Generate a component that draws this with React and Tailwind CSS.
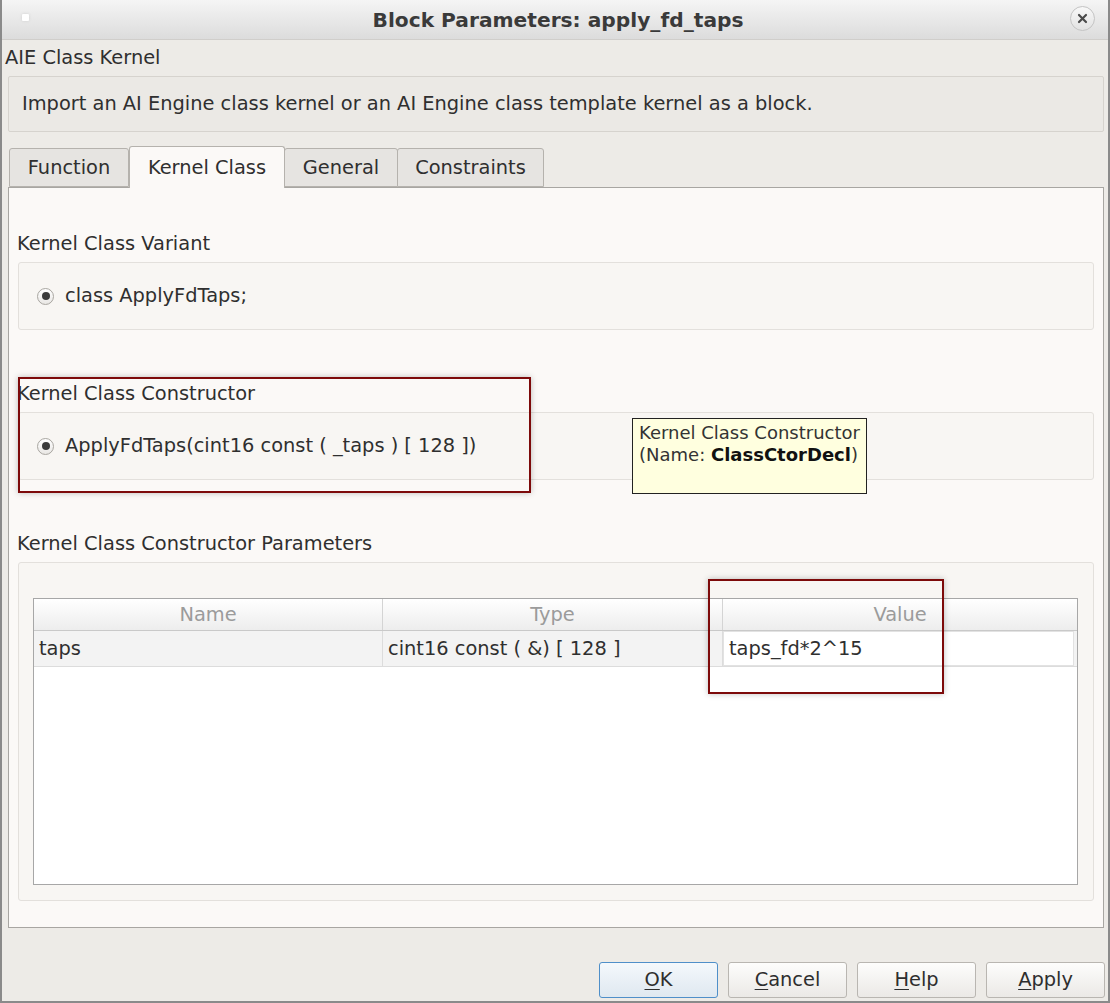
import React from "react";

const font = { fontFamily: '"DejaVu Sans", "Liberation Sans", sans-serif' };

const Radio = () => (
  <span className="flex h-[17px] w-[17px] items-center justify-center rounded-full border border-[#a9a6a1] bg-gradient-to-b from-[#ffffff] to-[#e9e7e4]">
    <span className="h-[8px] w-[8px] rounded-full bg-[#3a3a3a]" />
  </span>
);

const Btn = ({ first, rest, primary }) => (
  <button
    className={`h-[36px] w-[119px] rounded-[3px] border text-[19.4px] text-[#2e2e2e] ${
      primary
        ? "border-[#4f8fc9] bg-gradient-to-b from-[#f4f8fc] to-[#dfe8f0]"
        : "border-[#b9b6b1] bg-gradient-to-b from-[#fdfdfc] to-[#ebe9e6]"
    }`}
  >
    <span className="underline underline-offset-[3px]">{first}</span>
    {rest}
  </button>
);

export default function App() {
  const tabs = [
    { name: "Function", w: "w-[120px]" },
    { name: "Kernel Class", w: "w-[156px]", active: true },
    { name: "General", w: "w-[114px]" },
    { name: "Constraints", w: "w-[147px]" },
  ];

  return (
    <div
      style={font}
      className="relative flex h-[1003px] w-[1110px] flex-col overflow-hidden border-x-2 border-b-2 border-[#8a8a8a] bg-[#edebe7] text-[19.4px] leading-[22px] text-[#2f2f2f]"
    >
      {/* title bar */}
      <div className="relative flex h-[40px] shrink-0 items-center justify-center border-b border-[#d0cecb] bg-gradient-to-b from-[#f5f5f5] to-[#dcdcdc]">
        <span className="absolute left-[20px] top-[14px] h-[7px] w-[7px] rounded-[1px] bg-white shadow-[0_0_3px_#cfcfcf]" />
        <span className="ml-[6px] text-[20.2px] font-bold text-[#3a3a3a]">Block Parameters: apply_fd_taps</span>
        <span className="absolute right-[13px] top-[6px] flex h-[25px] w-[25px] items-center justify-center rounded-full border border-[#c4c4c4] bg-gradient-to-b from-[#f8f8f8] to-[#e2e2e2]">
          <svg width="11" height="11" viewBox="0 0 11 11">
            <path d="M2 2 L9 9 M9 2 L2 9" stroke="#4a4a4a" strokeWidth="2.2" strokeLinecap="round" />
          </svg>
        </span>
      </div>

      <div className="flex flex-1 flex-col pl-[6px] pr-[4px]">
        <div className="-ml-[3px] pt-[7px]">AIE Class Kernel</div>

        <div className="mt-[7px] flex h-[56px] items-center rounded-[2px] border border-[#d6d3ce] bg-[#ebe9e5] pl-[13px]">
          Import an AI Engine class kernel or an AI Engine class template kernel as a block.
        </div>

        {/* tabs */}
        <div className="mt-[14px] flex items-end pl-[1px]">
          {tabs.map((t) =>
            t.active ? (
              <div
                key={t.name}
                className={`${t.w} relative z-10 -mb-px flex h-[42px] items-center justify-center rounded-t-[3px] border border-b-0 border-[#b5b2ad] bg-[#fbf9f7]`}
              >
                {t.name}
              </div>
            ) : (
              <div
                key={t.name}
                className={`${t.w} -ml-px flex h-[39px] items-center justify-center rounded-t-[3px] border border-[#b5b2ad] bg-[#e6e4e1] first:ml-0`}
              >
                {t.name}
              </div>
            )
          )}
        </div>

        {/* tab panel */}
        <div className="flex h-[741px] flex-col border border-[#a8a6a2] bg-[#fbf9f7] pl-[8px] pr-[9px]">
          <div className="mt-[45px]">Kernel Class Variant</div>
          <div className="mt-[7px] ml-[1px] flex h-[68px] items-center gap-[11px] rounded-[3px] border border-[#e3e0dc] bg-[#f8f6f3] pl-[18px]">
            <Radio />
            <span>class ApplyFdTaps;</span>
          </div>

          <div className="mt-[53px]">Kernel Class Constructor</div>
          <div className="mt-[7px] ml-[1px] flex h-[68px] items-center gap-[11px] rounded-[3px] border border-[#e3e0dc] bg-[#f8f6f3] pl-[18px]">
            <Radio />
            <span>ApplyFdTaps(cint16 const ( _taps ) [ 128 ])</span>
          </div>

          <div className="mt-[53px]">Kernel Class Constructor Parameters</div>
          <div className="mt-[7px] ml-[1px] h-[339px] rounded-[3px] border border-[#e3e0dc] bg-[#f8f6f3] pb-[15px] pl-[14px] pr-[15px] pt-[35px]">
            <div className="flex h-full flex-col border border-[#a7a7a7] bg-white">
              <div className="grid h-[32px] grid-cols-[349px_340px_1fr] border-b border-[#c9c9c9] bg-gradient-to-b from-[#ffffff] to-[#ededed] text-[#9b9b9b]">
                <div className="flex items-center justify-center border-r border-[#d4d4d4]">Name</div>
                <div className="flex items-center justify-center border-r border-[#d4d4d4]">Type</div>
                <div className="flex items-center justify-center">Value</div>
              </div>
              <div className="grid h-[36px] grid-cols-[349px_340px_1fr] border-b border-[#dcdcdc] bg-[#f3f3f3]">
                <div className="flex items-center border-r border-[#dcdcdc] pl-[5px]">taps</div>
                <div className="flex items-center border-r border-[#dcdcdc] pl-[5px]">cint16 const ( &amp;) [ 128 ]</div>
                <div className="mr-[3px] flex items-center border border-[#e2e2e2] bg-white pl-[5px]">taps_fd*2^15</div>
              </div>
            </div>
          </div>
        </div>

        {/* buttons */}
        <div className="-mr-[1px] mt-[34px] flex justify-end gap-[10px]">
          <Btn first="O" rest="K" primary />
          <Btn first="C" rest="ancel" />
          <Btn first="H" rest="elp" />
          <Btn first="A" rest="pply" />
        </div>
      </div>

      {/* annotation boxes */}
      <div className="pointer-events-none absolute left-[16px] top-[377px] h-[116px] w-[513px] border-2 border-[#7d0a0a] shadow-[0_0_6px_rgba(0,0,0,0.25)]" />
      <div className="pointer-events-none absolute left-[706px] top-[579px] h-[115px] w-[236px] border-2 border-[#7d0a0a] shadow-[0_0_6px_rgba(0,0,0,0.25)]" />

      {/* tooltip */}
      <div className="absolute left-[630px] top-[418px] h-[76px] w-[235px] border border-[#222] bg-[#ffffdf] pl-[6px] pt-[3px] text-[18px] leading-[22px] text-[#333]">
        <div>Kernel Class Constructor</div>
        <div>
          (Name: <b className="text-[#111]">ClassCtorDecl</b>)
        </div>
      </div>
    </div>
  );
}
